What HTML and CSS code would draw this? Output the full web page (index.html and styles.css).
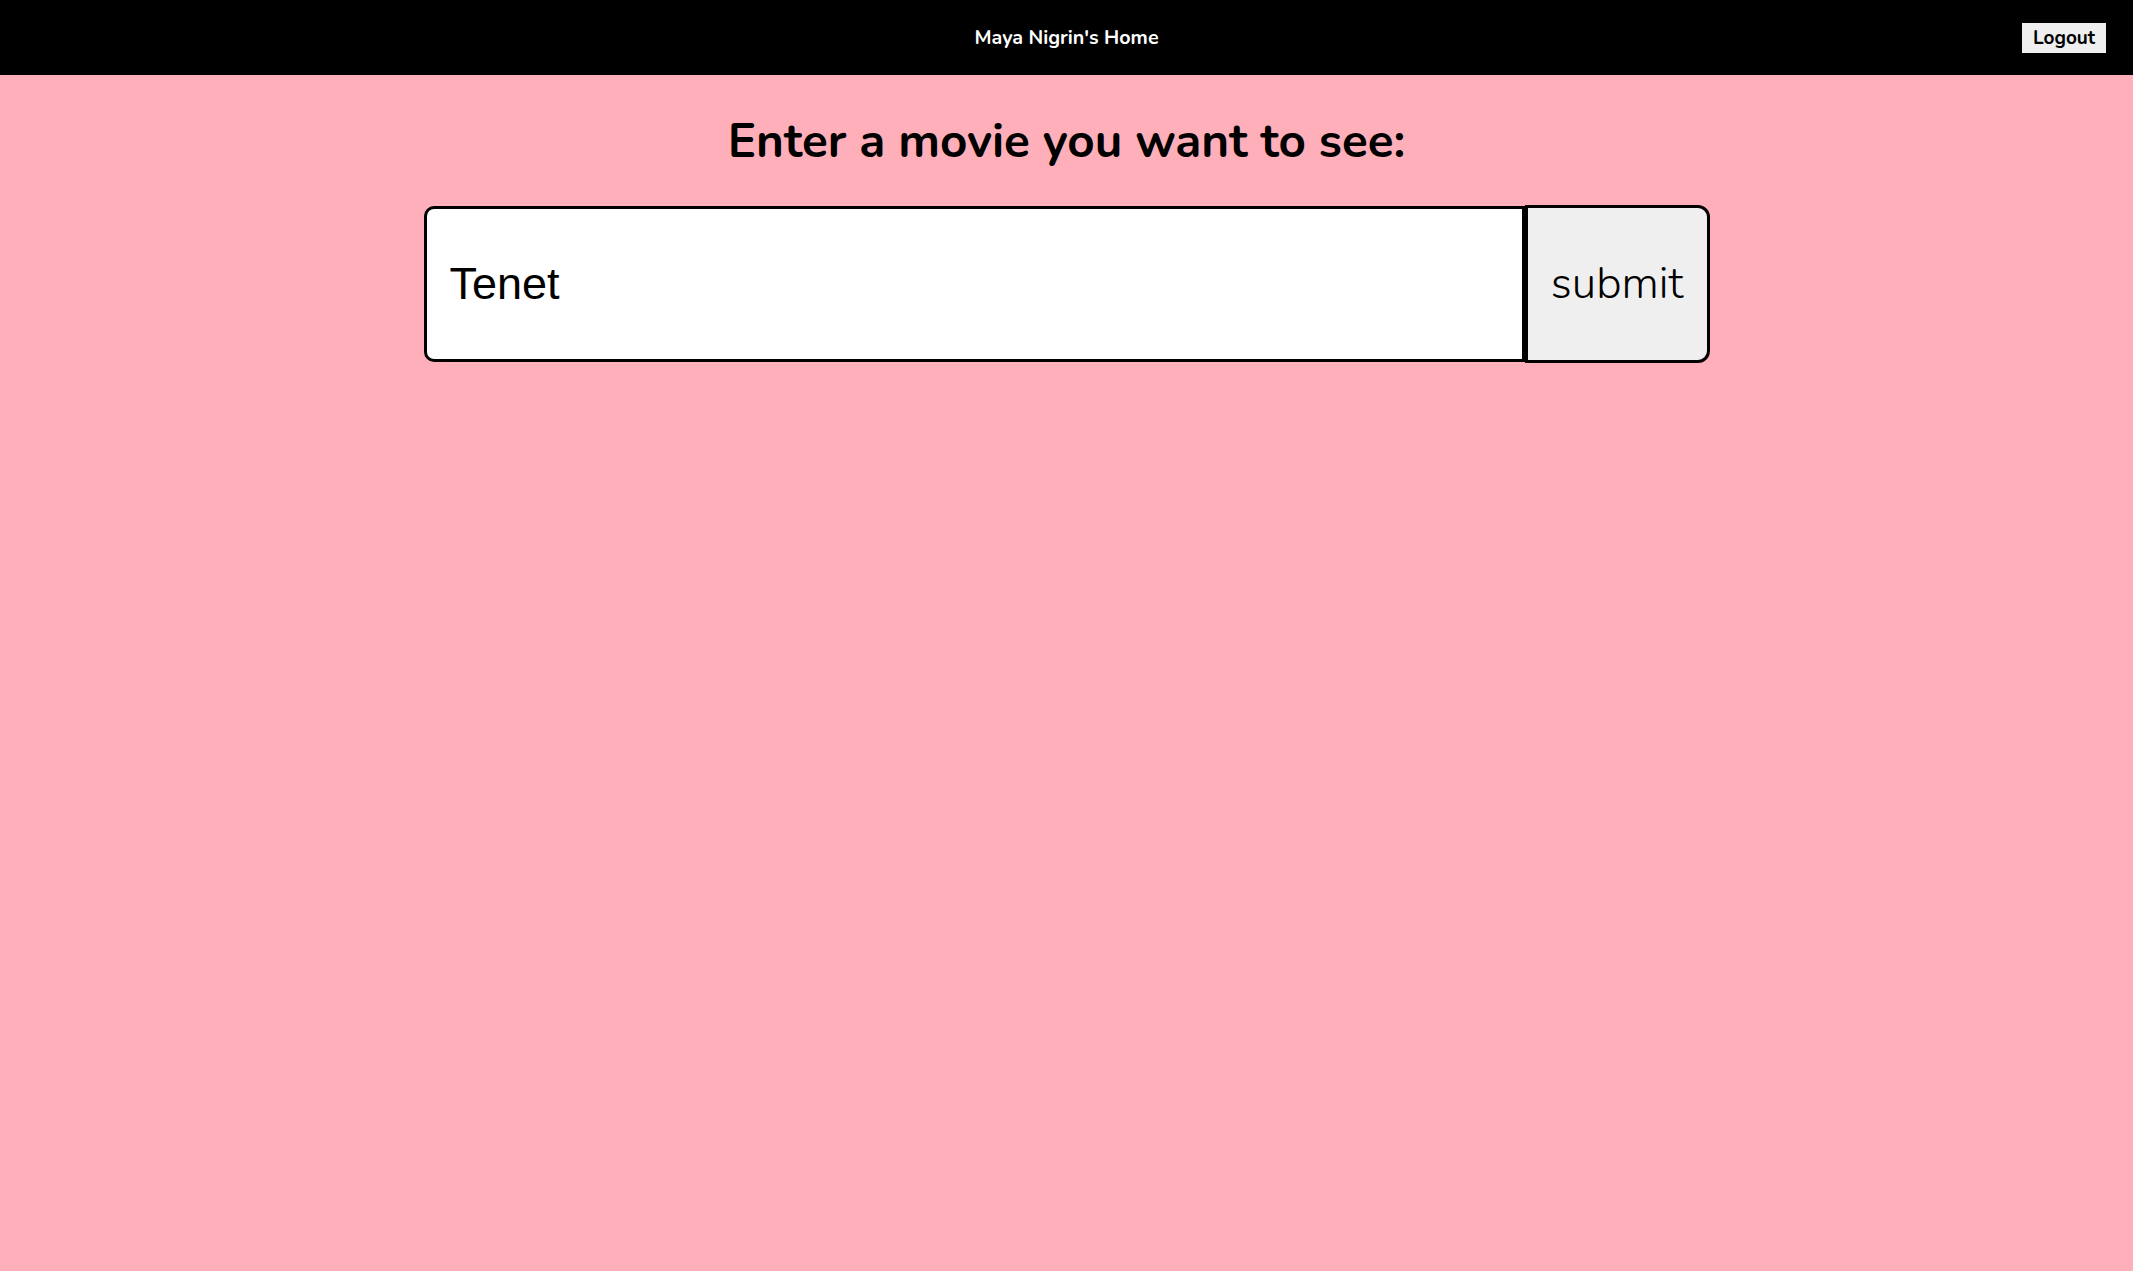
FILE: index.html
```html
<!DOCTYPE html>
<html lang="en">
<head>
<meta charset="utf-8">
<title>Maya Nigrin's Home</title>
<link rel="stylesheet" href="styles.css">
</head>
<body>
<header class="topbar">
  <div class="topbar-spacer"></div>
  <div class="topbar-title">Maya Nigrin's Home</div>
  <div class="topbar-actions"><button class="logout" type="button">Logout</button></div>
</header>
<main class="content">
  <h1 class="prompt">Enter a movie you want to see:</h1>
  <form class="search">
    <input class="search-input" type="text" value="Tenet">
    <button class="search-submit" type="button">submit</button>
  </form>
</main>
</body>
</html>
```
FILE: styles.css
```css
* { box-sizing: border-box; }
html, body { margin: 0; padding: 0; }
body {
  background: #ffafb9;
  font-family: "Nunito", Lato, "Noto Sans", sans-serif;
  min-height: 1271px;
}
.topbar {
  background: #000;
  height: 75px;
  display: grid;
  grid-template-columns: 1fr auto 1fr;
  align-items: center;
  padding: 0 27px;
}
.topbar-title {
  color: #fff;
  font-weight: 700;
  font-size: 19.7px;
}
.topbar-actions {
  display: flex;
  justify-content: flex-end;
}
.logout {
  font-family: inherit;
  font-weight: 700;
  font-size: 19px;
  background: #efefef;
  color: #000;
  border: none;
  height: 30px;
  width: 84px;
  padding: 0;
}
.content {
  display: flex;
  flex-direction: column;
  align-items: center;
}
.prompt {
  margin: 38px 0 0;
  font-size: 47.6px;
  font-weight: 700;
  line-height: 1.2;
  color: #000;
}
.search {
  margin-top: 36px;
  display: flex;
}
.search-input {
  width: 1101px;
  height: 156px;
  border: 3px solid #000;
  border-radius: 10px 0 0 10px;
  background: #fff;
  font-family: "Liberation Sans", Arial, sans-serif;
  font-size: 45px;
  padding: 0 0 0 23px;
  color: #000;
  outline: none;
}
.search-submit {
  width: 185px;
  height: 158px;
  margin-top: -1px;
  border: 3px solid #000;
  border-radius: 0 12px 12px 0;
  background: #efefef;
  font-family: inherit;
  font-weight: 300;
  font-size: 44px;
  color: #000;
  padding: 0;
}
```
